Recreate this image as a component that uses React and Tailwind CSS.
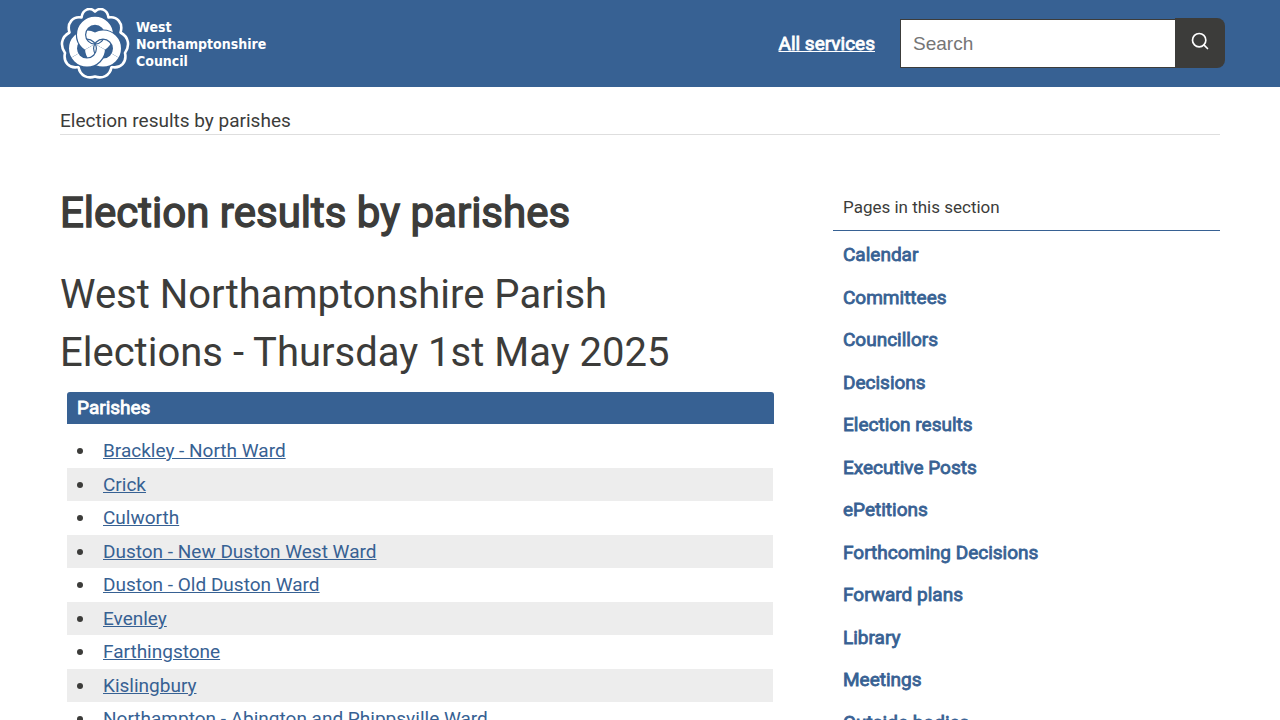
import { Search } from "lucide-react";

const parishes = [
  "Brackley - North Ward",
  "Crick",
  "Culworth",
  "Duston - New Duston West Ward",
  "Duston - Old Duston Ward",
  "Evenley",
  "Farthingstone",
  "Kislingbury",
  "Northampton - Abington and Phippsville Ward",
];

const sections = [
  "Calendar",
  "Committees",
  "Councillors",
  "Decisions",
  "Election results",
  "Executive Posts",
  "ePetitions",
  "Forthcoming Decisions",
  "Forward plans",
  "Library",
  "Meetings",
  "Outside bodies",
];

function Ring({ cx, cy }) {
  return (
    <>
      <circle cx={cx} cy={cy} r="14" stroke="#376193" strokeWidth="10.4" />
      <circle cx={cx} cy={cy} r="14" stroke="#fff" strokeWidth="8" />
    </>
  );
}

// Tudor rose outline around three interlaced rings; each third of the knot
// has a different ring on top.
function Rose() {
  return (
    <svg viewBox="59 8 70 72" className="h-[72px] w-[70px]" fill="none" aria-hidden="true">
      <clipPath id="rose-left">
        <path d="M94 44 V4 H54 V67.100 Z" />
      </clipPath>
      <clipPath id="rose-right">
        <path d="M94 44 V4 H134 V67.100 Z" />
      </clipPath>
      <clipPath id="rose-bottom">
        <path d="M94 44 L54 67.100 V84 H134 V67.100 Z" />
      </clipPath>
      <path
        stroke="#fff"
        strokeWidth="2.6"
        strokeLinejoin="round"
        d="M94 11.5 C99 6.5 106.5 9.500 107.500 17.500 C116 16 122.500 23 119.500 32.500 C128 37 129 46 124 53 C126 62 120 69 110.500 67 C109 76 101 79 94 76.500 C87 79 79 76 77.500 67 C68 69 62 62 64 53 C59 46 60 37 68.500 32.500 C65.500 23 72 16 80.500 17.500 C81.500 9.500 89 6.500 94 11.500 Z"
      />
      <g clipPath="url(#rose-left)">
        <Ring cx="102" cy="48.600" />
        <Ring cx="86" cy="48.600" />
        <Ring cx="94" cy="34.800" />
      </g>
      <g clipPath="url(#rose-right)">
        <Ring cx="86" cy="48.600" />
        <Ring cx="94" cy="34.800" />
        <Ring cx="102" cy="48.600" />
      </g>
      <g clipPath="url(#rose-bottom)">
        <Ring cx="94" cy="34.800" />
        <Ring cx="102" cy="48.600" />
        <Ring cx="86" cy="48.600" />
      </g>
    </svg>
  );
}

export default function App() {
  return (
    <div className="h-screen overflow-hidden bg-white font-[Roboto,sans-serif] text-[19px] text-[#3c3c3a]">
      <header className="bg-[#376193]">
        <div className="mx-auto flex h-[87px] max-w-[1280px] items-center justify-between px-[60px]">
          <a href="#home" className="flex items-center gap-[6px] text-white" aria-label="West Northamptonshire Council">
            <Rose />
            <span className="pt-[2px] font-['DejaVu_Sans_Condensed','Noto_Sans',sans-serif] text-[14px] leading-[17px] font-bold">
              West
              <br />
              Northamptonshire
              <br />
              Council
            </span>
          </a>
          <div className="flex items-baseline gap-[25px] self-start pt-[18px]">
            <a href="#services" className="text-white underline [-webkit-text-stroke:0.8px]">
              All services
            </a>
            <form className="-mr-[5px] flex items-end" role="search">
              <input
                type="search"
                aria-label="Search"
                placeholder="Search"
                className="h-[49px] w-[275px] border border-r-0 border-[#3c3c3a] bg-white px-3 font-['Liberation_Sans',sans-serif] placeholder:text-[#757575]"
              />
              <button
                type="submit"
                aria-label="Submit search"
                className="flex h-[50px] w-[50px] items-center justify-center rounded-r-lg bg-[#3c3c3a] pb-1 text-white"
              >
                <Search size={20} strokeWidth={2} />
              </button>
            </form>
          </div>
        </div>
      </header>

      <div className="mx-auto max-w-[1280px] px-[60px]">
        <nav aria-label="Breadcrumb" className="border-b border-[#dedede] pt-5 leading-[27px]">
          Election results by parishes
        </nav>

        <div className="flex gap-[59px]">
          <main className="min-w-0 flex-1 pt-[49px]">
            <h1 className="text-[42px] leading-[58px] [-webkit-text-stroke:1.4px]">Election results by parishes</h1>
            <h2 className="mt-6 text-[40px] leading-[58px]">West Northamptonshire Parish Elections - Thursday 1st May 2025</h2>
            <section className="mt-[10px] ml-[7px]">
              <h3 className="rounded-t-[3px] bg-[#376193] px-[10px] leading-8 text-white [-webkit-text-stroke:0.8px]">
                Parishes
              </h3>
              <ul className="mt-[10px] mr-px list-disc">
                {parishes.map((name) => (
                  <li
                    key={name}
                    className="list-inside pl-[10px] leading-[34px] even:bg-[#ededed] even:leading-[33px]"
                  >
                    <a href="#parish" className="text-[#376193] underline">
                      {name}
                    </a>
                  </li>
                ))}
              </ul>
            </section>
          </main>

          <aside className="w-[387px] pt-[49px]">
            <h2 className="border-b border-[#376193] px-[10px] text-[17px] leading-[46px]">Pages in this section</h2>
            <ul className="mt-[3px] px-[10px]">
              {sections.map((name) => (
                <li key={name} className="leading-[42px] even:leading-[43px]">
                  <a href="#section" className="text-[#376193] [-webkit-text-stroke:0.8px]">
                    {name}
                  </a>
                </li>
              ))}
            </ul>
          </aside>
        </div>
      </div>
    </div>
  );
}
